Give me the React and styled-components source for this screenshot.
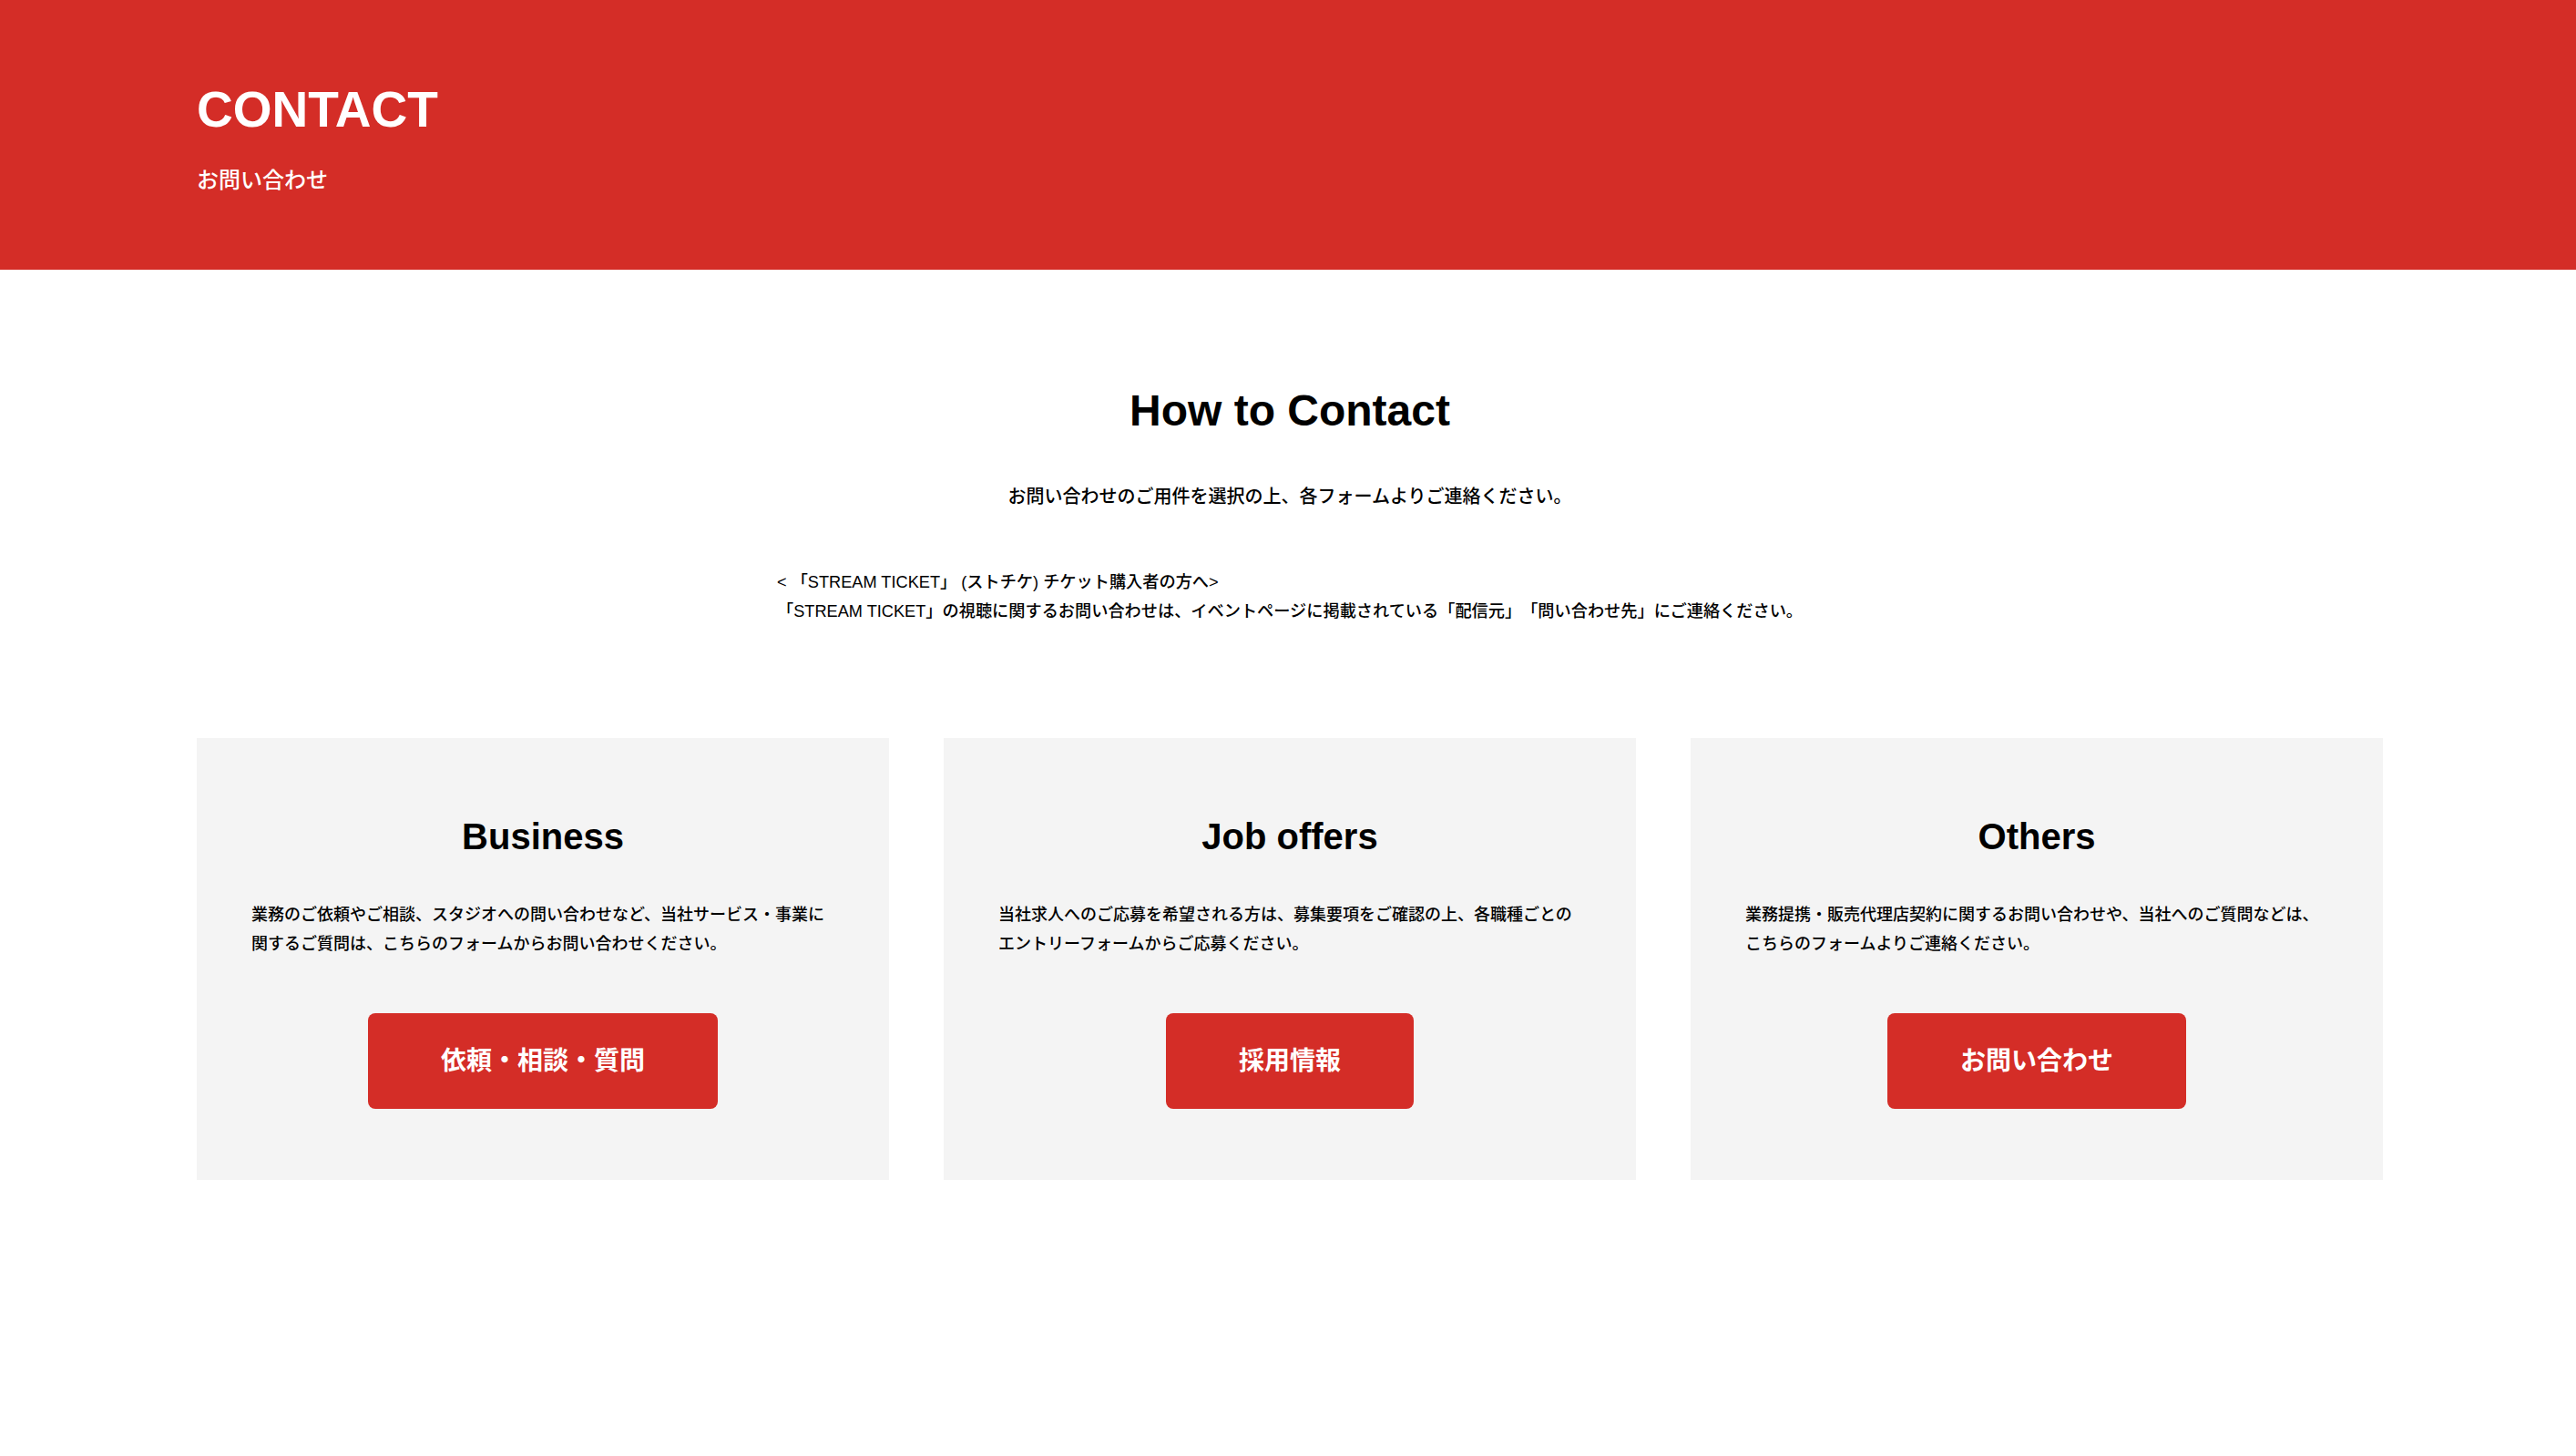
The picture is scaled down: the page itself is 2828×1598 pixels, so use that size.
import React from "react";
import styled, { createGlobalStyle } from "styled-components";

const RED = "#d42d27";

const GlobalStyle = createGlobalStyle`
  html, body {
    margin: 0;
    padding: 0;
    background: #ffffff;
  }
  body {
    font-family: "Liberation Sans", "Noto Sans CJK JP", sans-serif;
    color: #000000;
    text-spacing-trim: space-all;
    -webkit-font-smoothing: antialiased;
  }
  * { box-sizing: border-box; }
`;

const Page = styled.div`
  min-height: 1598px;
  background: #ffffff;
`;

const Hero = styled.header`
  background: ${RED};
  color: #ffffff;
  padding: 87px 0 80px;
`;

const Container = styled.div`
  width: 2400px;
  margin: 0 212px 0 216px;
`;

const HeroTitle = styled.h1`
  margin: 0;
  font-size: 55px;
  line-height: 66px;
  font-weight: 700;
  letter-spacing: 0;
`;

const HeroSub = styled.p`
  margin: 27px 0 0;
  font-size: 24px;
  line-height: 36px;
  font-weight: 500;
`;

const Main = styled.main`
  padding: 126px 0 0;
`;

const SectionTitle = styled.h2`
  margin: 0;
  text-align: center;
  font-size: 48px;
  line-height: 58px;
  font-weight: 700;
`;

const Lead = styled.p`
  margin: 47px 0 0;
  text-align: center;
  font-size: 20px;
  line-height: 36px;
  font-weight: 500;
`;

const NoticeWrap = styled.div`
  display: flex;
  justify-content: center;
  margin-top: 60px;
`;

const Notice = styled.p`
  margin: 0;
  text-align: left;
  font-size: 18.2px;
  line-height: 32px;
  font-weight: 500;
`;

const CardGrid = styled.div`
  display: grid;
  grid-template-columns: repeat(3, 1fr);
  gap: 60px;
  margin-top: 123px;
`;

const Card = styled.section`
  background: #f4f4f4;
  padding: 84px 60px 78px;
  display: flex;
  flex-direction: column;
  align-items: center;
`;

const CardTitle = styled.h3`
  margin: 0;
  font-size: 40px;
  line-height: 48px;
  font-weight: 700;
`;

const CardText = styled.p`
  margin: 47px 0 0;
  align-self: stretch;
  min-height: 63px;
  text-align: left;
  font-size: 18px;
  line-height: 31.5px;
  font-weight: 500;
`;

const CardButton = styled.a`
  margin-top: 60px;
  height: 105px;
  padding: 0 80px 6px;
  display: inline-flex;
  align-items: center;
  justify-content: center;
  background: ${RED};
  color: #ffffff;
  border-radius: 8px;
  font-size: 28px;
  font-weight: 700;
  text-decoration: none;
  white-space: nowrap;
`;

const cards = [
  {
    title: "Business",
    text: "業務のご依頼やご相談、スタジオへの問い合わせなど、当社サービス・事業に関するご質問は、こちらのフォームからお問い合わせください。",
    button: "依頼・相談・質問",
  },
  {
    title: "Job offers",
    text: "当社求人へのご応募を希望される方は、募集要項をご確認の上、各職種ごとのエントリーフォームからご応募ください。",
    button: "採用情報",
  },
  {
    title: "Others",
    text: "業務提携・販売代理店契約に関するお問い合わせや、当社へのご質問などは、こちらのフォームよりご連絡ください。",
    button: "お問い合わせ",
  },
];

export default function App() {
  return (
    <Page>
      <GlobalStyle />
      <Hero>
        <Container>
          <HeroTitle>CONTACT</HeroTitle>
          <HeroSub>お問い合わせ</HeroSub>
        </Container>
      </Hero>
      <Main>
        <Container>
          <SectionTitle>How to Contact</SectionTitle>
          <Lead>お問い合わせのご用件を選択の上、各フォームよりご連絡ください。</Lead>
          <NoticeWrap>
            <Notice>
              &lt; 「STREAM TICKET」 (ストチケ) チケット購入者の方へ&gt;
              <br />
              「STREAM TICKET」の視聴に関するお問い合わせは、イベントページに掲載されている「配信元」「問い合わせ先」にご連絡ください。
            </Notice>
          </NoticeWrap>
          <CardGrid>
            {cards.map((c) => (
              <Card key={c.title}>
                <CardTitle>{c.title}</CardTitle>
                <CardText>{c.text}</CardText>
                <CardButton href="#">{c.button}</CardButton>
              </Card>
            ))}
          </CardGrid>
        </Container>
      </Main>
    </Page>
  );
}
